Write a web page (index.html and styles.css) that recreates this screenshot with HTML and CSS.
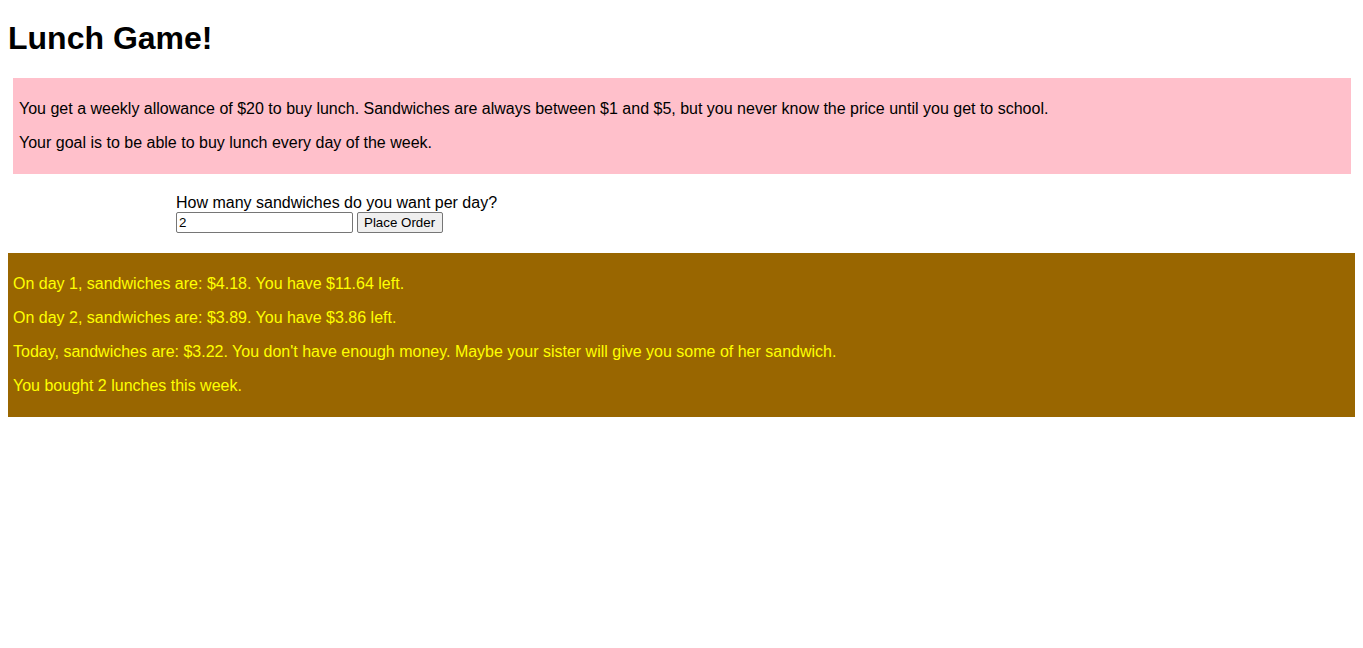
FILE: index.html
```html
<!DOCTYPE html>
<html>
<head>
<meta charset="utf-8">
<link rel="stylesheet" href="styles.css">
</head>
<body>
<h1 class="title">Lunch Game!</h1>
<div class="intro">
  <p>You get a weekly allowance of $20 to buy lunch. Sandwiches are always between $1 and $5, but you never know the price until you get to school.</p>
  <p>Your goal is to be able to buy lunch every day of the week.</p>
</div>
<form class="order">
  <label class="order-label" for="qty">How many sandwiches do you want per day?</label>
  <div class="order-row">
    <input id="qty" class="order-input" type="text" value="2">
    <button type="button" class="order-btn">Place Order</button>
  </div>
</form>
<div class="results">
  <p>On day 1, sandwiches are: $4.18. You have $11.64 left.</p>
  <p>On day 2, sandwiches are: $3.89. You have $3.86 left.</p>
  <p>Today, sandwiches are: $3.22. You don't have enough money. Maybe your sister will give you some of her sandwich.</p>
  <p>You bought 2 lunches this week.</p>
</div>
</body>
</html>
```
FILE: styles.css
```css
body {
  margin: 8px;
  font-family: "Liberation Sans", Arial, sans-serif;
  font-size: 16px;
  color: #000;
  background: #fff;
}
.title {
  font-size: 32px;
  font-weight: bold;
  margin: 12px 0 21px;
}
.intro {
  background: #ffc0cb;
  margin: 0 4px 0 5px;
  padding: 6px 6px 6px;
}
.intro p, .results p {
  margin: 16px 0;
}
.order {
  margin: 20px 0 20px;
  padding-left: 168px;
}
.order-label {
  display: block;
}
.order-row {
  display: flex;
  align-items: center;
  gap: 4px;
}
.order-input {
  width: 177px;
  height: 21px;
  box-sizing: border-box;
  font-family: "Liberation Sans", Arial, sans-serif;
  font-size: 13.33px;
  margin: 0;
  padding: 1px 2px;
  border: 1px solid #767676;
  border-radius: 2px;
}
.order-btn {
  height: 21px;
  box-sizing: border-box;
  font-family: "Liberation Sans", Arial, sans-serif;
  font-size: 13.33px;
  margin: 0;
  padding: 1px 7px 1px 6px;
  background: #efefef;
  border: 1px solid #767676;
  border-radius: 2px;
  color: #000;
}
.results {
  background: #996600;
  color: #ffff00;
  margin: 0 -2px 0 -1px;
  padding: 6px 6px 6px;
}
```
